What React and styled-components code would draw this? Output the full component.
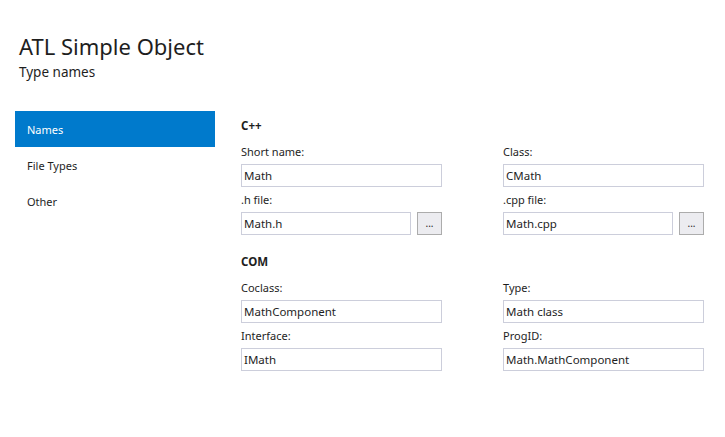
import React from "react";
import styled, { createGlobalStyle } from "styled-components";

const Global = createGlobalStyle`
  html, body { margin: 0; padding: 0; background: #ffffff; }
  body { font-family: "Noto Sans", "Open Sans", sans-serif; color: #1e1e1e; }
  * { box-sizing: border-box; }
`;

const Page = styled.div`
  width: 725px;
  height: 437px;
  background: #fff;
  padding-top: 31px;
  overflow: hidden;
`;

const Header = styled.header`
  padding-left: 19px;
`;

const Title = styled.h1`
  margin: 0;
  font-size: 22px;
  font-weight: 400;
  line-height: 30px;
  color: #1e1e1e;
`;

const Subtitle = styled.div`
  font-size: 13.5px;
  line-height: 18px;
  margin-top: 2px;
`;

const Body = styled.div`
  display: flex;
  margin-top: 30px;
  padding-left: 15px;
`;

const Sidebar = styled.nav`
  width: 200px;
  display: flex;
  flex-direction: column;
`;

const NavItem = styled.div`
  height: 36px;
  display: flex;
  align-items: center;
  padding-left: 12px;
  font-size: 11px;
  background: ${(p) => (p.$active ? "#007acc" : "transparent")};
  color: ${(p) => (p.$active ? "#ffffff" : "#1e1e1e")};
`;

const Content = styled.div`
  margin-left: 26px;
  padding-top: 7px;
  display: flex;
  flex-direction: column;
  gap: 19px;
`;

const Section = styled.section`
  display: flex;
  flex-direction: column;
`;

const SectionTitle = styled.div`
  font-size: 11.5px;
  font-weight: 700;
  line-height: 16px;
  margin-bottom: 10px;
`;

const Grid = styled.div`
  display: grid;
  grid-template-columns: 201px 201px;
  column-gap: 61px;
  row-gap: 5px;
`;

const Field = styled.div`
  display: flex;
  flex-direction: column;
`;

const Label = styled.label`
  font-size: 11px;
  line-height: 16px;
  margin-bottom: 4px;
`;

const InputRow = styled.div`
  display: flex;
  gap: 6px;
`;

const Input = styled.div`
  flex: 1;
  height: 23px;
  border: 1px solid #cccedb;
  background: #fff;
  font-size: 11.5px;
  line-height: 21px;
  padding-left: 2px;
  white-space: nowrap;
  overflow: hidden;
`;

const Browse = styled.div`
  width: 25px;
  height: 23px;
  border: 1px solid #acacac;
  background: #ececf0;
  font-size: 10px;
  line-height: 21px;
  text-align: center;
  color: #1e1e1e;
`;

const F = ({ label, value, browse }) => (
  <Field>
    <Label>{label}</Label>
    <InputRow>
      <Input>{value}</Input>
      {browse && <Browse>...</Browse>}
    </InputRow>
  </Field>
);

export default function App() {
  return (
    <Page>
      <Global />
      <Header>
        <Title>ATL Simple Object</Title>
        <Subtitle>Type names</Subtitle>
      </Header>
      <Body>
        <Sidebar>
          <NavItem $active>Names</NavItem>
          <NavItem>File Types</NavItem>
          <NavItem>Other</NavItem>
        </Sidebar>
        <Content>
          <Section>
            <SectionTitle>C++</SectionTitle>
            <Grid>
              <F label="Short name:" value="Math" />
              <F label="Class:" value="CMath" />
              <F label=".h file:" value="Math.h" browse />
              <F label=".cpp file:" value="Math.cpp" browse />
            </Grid>
          </Section>
          <Section>
            <SectionTitle>COM</SectionTitle>
            <Grid>
              <F label="Coclass:" value="MathComponent" />
              <F label="Type:" value="Math class" />
              <F label="Interface:" value="IMath" />
              <F label="ProgID:" value="Math.MathComponent" />
            </Grid>
          </Section>
        </Content>
      </Body>
    </Page>
  );
}
